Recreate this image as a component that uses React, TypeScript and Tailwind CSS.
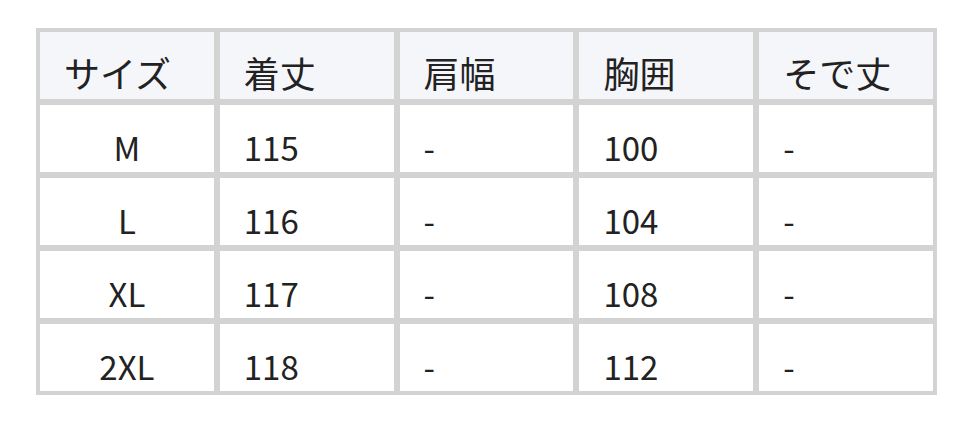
const headers = ["サイズ", "着丈", "肩幅", "胸囲", "そで丈"];

const rows = [
  ["M", "115", "-", "100", "-"],
  ["L", "116", "-", "104", "-"],
  ["XL", "117", "-", "108", "-"],
  ["2XL", "118", "-", "112", "-"],
];

export default function App() {
  return (
    <div className="min-h-[422px] w-[972px] bg-white pl-[36px] pt-[28px] font-['Noto_Sans_CJK_JP','Noto_Sans',sans-serif] leading-[48px] text-[#222222]">
      <div className="grid w-[901px] grid-cols-5 gap-[6px] bg-[#d3d3d3] p-[4px]">
        {headers.map((h) => (
          <div
            key={h}
            className="flex h-[67px] items-end bg-[#f5f6fa] pb-[3px] pl-6 text-[36px]"
          >
            {h}
          </div>
        ))}
        {rows.map((row) =>
          row.map((cell, i) => (
            <div
              key={row[0] + i}
              className={
                i === 0
                  ? "flex h-[67px] items-end justify-center bg-white pb-[1px] text-[33px]"
                  : "flex h-[67px] items-end bg-white pb-[1px] pl-6 text-[33px]"
              }
            >
              {cell}
            </div>
          ))
        )}
      </div>
    </div>
  );
}
